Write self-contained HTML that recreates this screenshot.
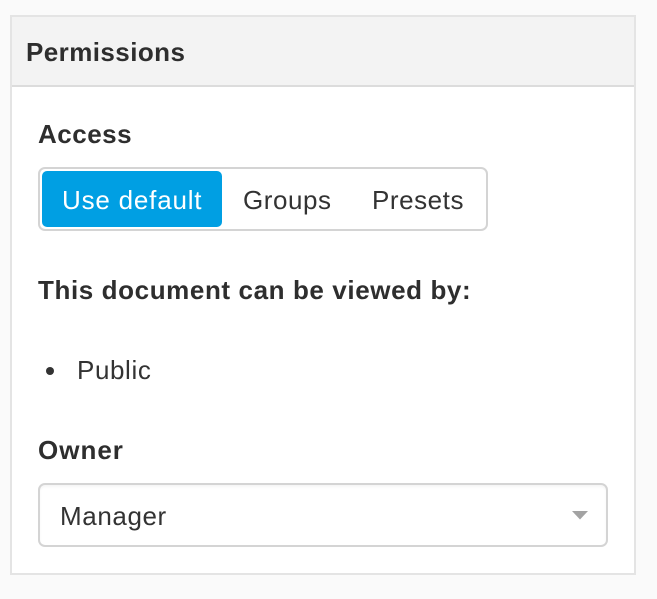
<!DOCTYPE html>
<html lang="en">
<head>
<meta charset="utf-8">
<title>Permissions</title>
<style>
html,body{margin:0;padding:0;background:#fafafa;}
body{width:657px;height:599px;position:relative;overflow:hidden;font-family:"Liberation Sans",Arial,sans-serif;color:#333;}
div{box-sizing:border-box;position:absolute;}
.t{white-space:nowrap;line-height:30px;height:30px;font-size:26px;}
.b{font-weight:700;color:#2e2e2e;}
</style>
</head>
<body>
<div style="left:10px;top:15px;width:626px;height:560px;background:#fff;border:2px solid #e4e4e4;"></div>
<div style="left:12px;top:17px;width:622px;height:70px;background:#f3f3f3;border-bottom:2px solid #dcdcdc;"></div>
<div class="t b" style="left:26px;top:37px;letter-spacing:.43px;">Permissions</div>
<div class="t b" style="left:38px;top:119px;letter-spacing:.5px;">Access</div>
<div style="left:38px;top:167px;width:450px;height:64px;background:#fff;border:2px solid #d4d4d4;border-radius:7px;"></div>
<div style="left:42px;top:171px;width:180px;height:56px;background:#009fe3;border-radius:5px;"></div>
<div class="t" style="left:62px;top:185px;color:#fff;letter-spacing:.8px;">Use default</div>
<div class="t" style="left:243px;top:185px;letter-spacing:.55px;">Groups</div>
<div class="t" style="left:372px;top:185px;letter-spacing:.55px;">Presets</div>
<div class="t b" style="left:38px;top:275px;letter-spacing:.6px;">This document can be viewed by:</div>
<div style="left:46px;top:367px;width:8px;height:8px;border-radius:50%;background:#333;"></div>
<div class="t" style="left:77px;top:355px;letter-spacing:.6px;">Public</div>
<div class="t b" style="left:38px;top:435px;letter-spacing:1px;">Owner</div>
<div style="left:38px;top:483px;width:570px;height:64px;background:#fff;border:2px solid #d4d4d4;border-radius:7px;box-shadow:inset 0 2px 2px rgba(0,0,0,.04);"></div>
<div class="t" style="left:60px;top:501px;letter-spacing:.6px;">Manager</div>
<svg style="position:absolute;left:572px;top:511px;" width="16" height="9" viewBox="0 0 16 9"><path d="M0 0H16L8 8.500Z" fill="#a3a3a3"/></svg>
</body>
</html>
